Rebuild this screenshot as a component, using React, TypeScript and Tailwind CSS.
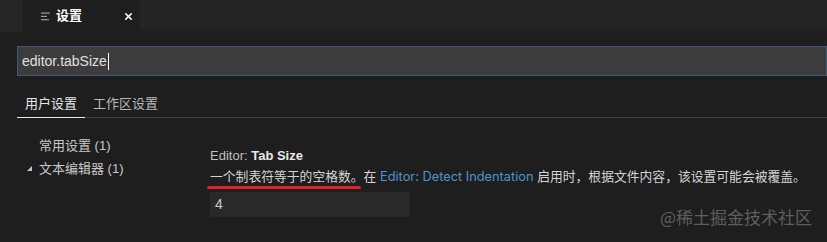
import { X } from 'lucide-react';

const FONT = "font-['Liberation_Sans','Noto_Sans_CJK_SC',sans-serif]";

function SettingsIcon() {
  return (
    <svg width="10" height="9" viewBox="0 0 10 9" className="shrink-0">
      <rect x="0" y="0.5" width="9" height="1.2" fill="#9a9a9a" />
      <rect x="0" y="3.8" width="6" height="1.2" fill="#9a9a9a" />
      <rect x="0" y="7.1" width="8" height="1.2" fill="#9a9a9a" />
    </svg>
  );
}

function Twistie() {
  return (
    <svg width="5" height="5" viewBox="0 0 5 5" className="shrink-0">
      <polygon points="5,0 5,5 0,5" fill="#c5c5c5" />
    </svg>
  );
}

export default function App() {
  return (
    <div className={`relative w-[827px] h-[242px] overflow-hidden bg-[#1e1e1e] text-[#cccccc] ${FONT}`}>
      {/* Tab bar */}
      <div className="flex h-8 bg-[#252526]">
        <div className="w-[23px] bg-[#262626]" />
        <div className="flex w-[117px] items-center bg-[#1e1e1e] pl-[18px] pr-[6px]">
          <SettingsIcon />
          <span className="ml-[5px] text-[13px] font-bold text-white">设置</span>
          <X className="ml-auto h-[11px] w-[11px] text-white" strokeWidth={3.5} />
        </div>
        <div className="flex-1 bg-gradient-to-b from-[#252525] from-80% to-[#1f1f1f]" />
      </div>

      {/* Search */}
      <div className="pl-[17px] pt-[14px]">
        <div className="flex h-[30px] items-center border border-[#3d5b7b] bg-[#3c3c3c] pl-[4px]">
          <span className="text-[14px] text-[#e0e0e0]">editor.tabSize</span>
          <span className="ml-[1px] h-[17px] w-px bg-white" />
        </div>
      </div>

      {/* Scope tabs */}
      <div className="ml-[17px] mt-[14px] flex h-[28px] border-b border-[#3f3f3f]">
        <div className="-mb-px flex w-[68px] items-center justify-center border-b border-[#e8e8e8] text-[13px] text-[#e6e6e6]">
          用户设置
        </div>
        <div className="ml-[8px] flex items-center text-[13px] text-[#b8b8b8]">工作区设置</div>
      </div>

      {/* Content */}
      <div className="flex pl-[17px]">
        <div className="w-[193px] pt-[16px] text-[13px] text-[#c8c8c8]">
          <div className="flex h-[23px] items-center pl-[22px]">常用设置 (1)</div>
          <div className="flex h-[23px] items-center pl-[10px]">
            <Twistie />
            <span className="ml-[7px]">文本编辑器 (1)</span>
          </div>
        </div>

        <div className="flex flex-col pt-[30px]">
          <div className="text-[13px] leading-[16px]">
            <span className="text-[#c0c0c0]">Editor: </span>
            <span className="font-bold text-[#e8e8e8]">Tab Size</span>
          </div>
          <div className="relative mt-[4px] whitespace-nowrap font-['Inter','Noto_Sans_CJK_SC',sans-serif] text-[12.8px] leading-[17px] text-[#d4d4d4]">
            一个制表符等于的空格数。在 <span className="text-[#4e94ce]">Editor: Detect Indentation</span> 启用时，根据文件内容，该设置可能会被覆盖。
            <span className="absolute left-[-3px] top-[18px] h-[3px] w-[154px] rounded-full bg-[#e3202a]" />
          </div>
          <div className="mt-[7px] flex h-[25px] w-[200px] items-center bg-[#292929] pl-[5px] text-[14px] text-[#cccccc]">
            4
          </div>
        </div>
      </div>

      {/* Watermark */}
      <div className="absolute left-[660px] top-[206px] font-['Noto_Sans_CJK_SC',sans-serif] text-[17px] leading-[22px] text-[#5e5e5e]">
        @稀土掘金技术社区
      </div>
    </div>
  );
}
